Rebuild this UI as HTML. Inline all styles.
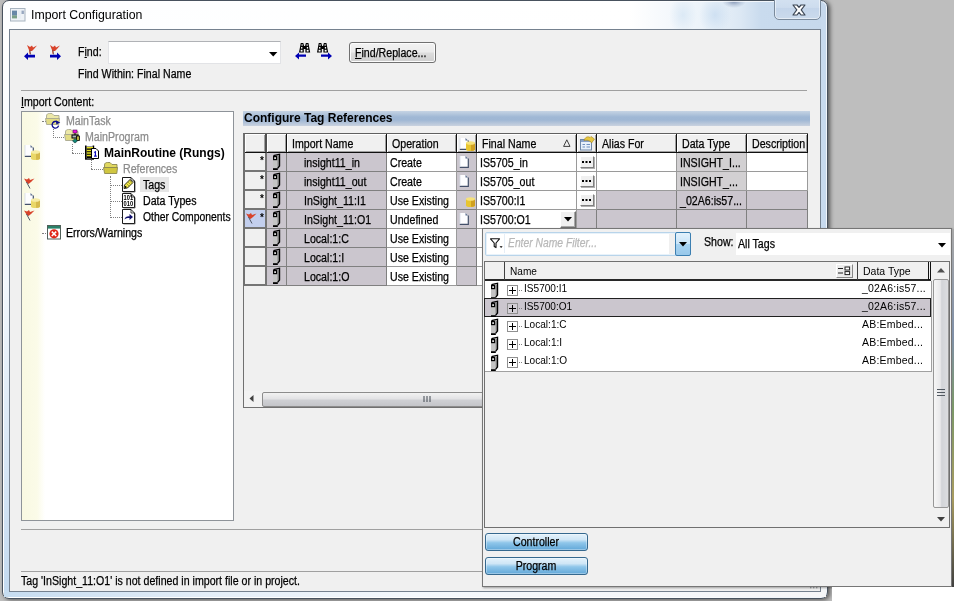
<!DOCTYPE html>
<html>
<head>
<meta charset="utf-8">
<title>Import Configuration</title>
<style>
html,body{margin:0;padding:0;}
body{width:954px;height:601px;overflow:hidden;position:relative;background:#bebebe;font-family:"Liberation Sans",sans-serif;font-size:12px;color:#000;}
.abs{position:absolute;}
svg{position:absolute;overflow:visible;}
.t{position:absolute;white-space:nowrap;line-height:14px;height:14px;transform:scaleX(.885);transform-origin:0 50%;-webkit-text-stroke:.25px currentColor;}
.tb{position:absolute;white-space:nowrap;line-height:14px;height:14px;font-weight:bold;}
.n{display:inline-block;transform:scaleX(.885);transform-origin:0 50%;-webkit-text-stroke:.25px currentColor;}
.g{color:#8c8c8c;}
u{text-decoration:underline;}
/* window */
#win{left:2px;top:0px;width:826px;height:599px;box-sizing:border-box;border:1px solid #48525e;border-radius:7px;background:radial-gradient(ellipse 12px 7px at 731px 0px,rgba(90,110,150,.7),rgba(120,140,175,.3) 60%,rgba(160,180,210,0) 100%),radial-gradient(ellipse 16px 20px at 712px 14px,rgba(200,220,240,.8),rgba(200,220,240,0) 100%),radial-gradient(ellipse 14px 20px at 680px 14px,rgba(214,230,244,.8),rgba(214,230,244,0) 100%),linear-gradient(90deg,#fdfeff 0,#ffffff 76%,#f4f8fc 81%,#eaf2f9 86%,#dce8f4 89.5%,#c9dbee 92%,#c6d8ec);box-shadow:inset 0 0 0 1px rgba(255,255,255,.75),2px 1px 4px rgba(0,0,0,.55);}
#lframe{left:4px;top:29px;width:5px;height:566px;background:linear-gradient(#ffffff,#f2f7fc 45%,#c4daf0);}
#bframe{left:4px;top:591px;width:822px;height:6px;background:linear-gradient(90deg,#c6dcf0,#e4eef8 25%,#f4f8fc 50%,#f6f6f8);}
#rframe{left:821px;top:20px;width:5px;height:576px;background:linear-gradient(#c8daee,#c8daee 40%,#f4f6f8);}
#client{left:9px;top:29px;width:812px;height:563px;background:#f0f0f0;border:1px solid #75818f;box-sizing:border-box;}
#title{left:31px;top:7px;font-size:12.3px;line-height:16px;height:16px;position:absolute;white-space:nowrap;}
/* grid */
#grid{left:243px;top:133px;border-left:2px solid #707070;border-top:1px solid #606060;display:grid;grid-template-columns:22px 20px 100px 70px 20px 100px 20px 80px 70px 61px;grid-template-rows:19px repeat(7,19px);}
#grid>div{box-sizing:border-box;border-right:1px solid #808080;border-bottom:1px solid #808080;line-height:20px;white-space:nowrap;overflow:hidden;padding-left:3px;position:relative;}
#grid>.h{background:#f0f0f0;border-right:1px solid #101010;border-bottom:1px solid #101010;box-shadow:inset 1px 1px 0 #fff,inset -1px -1px 0 #a0a0a0;line-height:20px;padding-left:5px;}
#grid>.rh{background:#f0f0f0;border-right:2px solid #757575;border-bottom:2px solid #757575;}
#grid>.rh.sel{background:#c3cfee;}
#grid>.h.h0{border-right:2px solid #505050;}
#grid>.l{background:#cbc6ce;}
#grid>.w{background:#fff;border-color:#9a9a9a;}
#grid>.d{background:#d2d0d2;border-color:#9a9a9a;}
#grid>.in{padding-left:17px;}
.star{position:absolute;left:15px;top:3px;font-size:10px;line-height:10px;font-weight:bold;}
/* popup */
#pop{left:482px;top:228px;width:470px;height:359px;box-sizing:border-box;border:1px solid #767676;background:#f0f0f0;box-shadow:1px 1px 2px rgba(0,0,0,.35);}
.pr{position:absolute;left:485px;width:446px;height:18px;box-sizing:border-box;background:#fff;}
.pt{position:absolute;white-space:nowrap;line-height:14px;height:14px;font-size:10.5px;transform:scaleX(.96);transform-origin:0 50%;}
.btn{position:absolute;box-sizing:border-box;border:1px solid #35688e;border-radius:3px;background:linear-gradient(#e4f2fb,#cfe6f6 35%,#8fc6ea 55%,#62a8d8);box-shadow:inset 0 0 0 1px rgba(255,255,255,.35);text-align:center;line-height:17px;}
</style>
</head>
<body>
<div id="root" style="position:absolute;left:0;top:0;width:954px;height:601px;will-change:transform;">

<div id="win" class="abs"></div>
<div id="lframe" class="abs"></div><div id="bframe" class="abs"></div><div id="rframe" class="abs"></div>
<div id="client" class="abs"></div>
<svg style="left:10px;top:8px" width="16" height="14" viewBox="0 0 16 14" ><rect x=".5" y=".5" width="14.5" height="12.5" fill="#eef2f6" stroke="#a8b4c0" stroke-width="1"/><rect x="2" y="2.6" width="5" height="5" fill="#6888a8"/><rect x="2" y="7.4" width="5" height="3" fill="#7aa088"/><rect x="8" y="2.6" width="3" height="8" fill="#e8eef4"/><rect x="11.5" y="2.6" width="2.4" height="3.4" fill="#98a8c0"/></svg>
<div id="title">Import Configuration</div>
<div class="abs" style="left:774px;top:-3px;width:47px;height:23px;box-sizing:border-box;border:1px solid #7a8a9c;border-radius:0 0 5px 5px;background:linear-gradient(#d4e2f1,#cddcee 45%,#c4d5ea 50%,#cbdaec);box-shadow:inset 0 0 0 1px rgba(255,255,255,.5);"></div>
<svg style="left:792px;top:4px" width="14" height="12" viewBox="0 0 14 12" ><path d="M1 1 H5 L7 3.4 L9 1 H13 L9.2 5.8 L13 11 H9 L7 8.4 L5 11 H1 L4.8 5.8 Z" fill="#fff" stroke="#3c4654" stroke-width="1.2" stroke-linejoin="round"/></svg>
<svg style="left:24px;top:44px" width="14" height="16" viewBox="0 0 14 16" ><path d="M3 1 L6 3 L8 1.5 L9 3.5 L13 1.5 L10 5 L8 7 L6.2 7 L6.6 10 L5.6 10 L5 6 Z" fill="#d8432b"/><path d="M5.8 6 L6.6 10.5" stroke="#6a4a4a" stroke-width=".8" fill="none"/><path d="M11 10.8 H4 V8.4 L0 12.2 L4 16 V13.4 H11 Z" fill="#0000b4"/></svg>
<svg style="left:48px;top:44px" width="14" height="16" viewBox="0 0 14 16" ><g transform="translate(-1,0)"><path d="M3 1 L6 3 L8 1.5 L9 3.5 L13 1.5 L10 5 L8 7 L6.2 7 L6.6 10 L5.6 10 L5 6 Z" fill="#d8432b"/><path d="M5.8 6 L6.6 10.5" stroke="#6a4a4a" stroke-width=".8" fill="none"/></g><path d="M2 10.8 H9 V8.4 L13 12.2 L9 16 V13.4 H2 Z" fill="#0000b4"/></svg>
<div class="t" style="left:78px;top:45px;">F<u>i</u>nd:</div>
<div class="abs" style="left:108px;top:41px;width:173px;height:23px;box-sizing:border-box;border:1px solid #e2e3e6;border-top-color:#b0b2b6;background:#fff;"></div>
<svg style="left:269px;top:52px" width="9" height="5" viewBox="0 0 9 5" ><path d="M0 0 H8.4 L4.2 4.4 Z" fill="#000"/></svg>
<svg style="left:295px;top:43px" width="16" height="17" viewBox="0 0 16 17" ><g transform="translate(4,0) scale(.8,1)"><path d="M2.2 0 H5.4 L6.4 3 H7.6 L8.6 0 H11.8 L14 9.6 H8 V6 H6 V9.6 H0 Z" fill="#000"/><rect x="3.2" y="1.2" width="1.3" height="1.6" fill="#fff"/><rect x="9.5" y="1.2" width="1.3" height="1.6" fill="#fff"/><rect x="2.6" y="4" width="1.6" height="1.6" fill="#fff"/><rect x="9.8" y="4" width="1.6" height="1.6" fill="#fff"/><rect x="2" y="6.8" width="2.4" height="1.8" fill="#fff"/><rect x="9.6" y="6.8" width="2.4" height="1.8" fill="#fff"/></g><path d="M11 11.4 H4 V9.4 L0 13 L4 16.6 V13.8 H11 Z" fill="#0000b4"/></svg>
<svg style="left:317px;top:43px" width="16" height="17" viewBox="0 0 16 17" ><g transform="translate(0,0) scale(.8,1)"><path d="M2.2 0 H5.4 L6.4 3 H7.6 L8.6 0 H11.8 L14 9.6 H8 V6 H6 V9.6 H0 Z" fill="#000"/><rect x="3.2" y="1.2" width="1.3" height="1.6" fill="#fff"/><rect x="9.5" y="1.2" width="1.3" height="1.6" fill="#fff"/><rect x="2.6" y="4" width="1.6" height="1.6" fill="#fff"/><rect x="9.8" y="4" width="1.6" height="1.6" fill="#fff"/><rect x="2" y="6.8" width="2.4" height="1.8" fill="#fff"/><rect x="9.6" y="6.8" width="2.4" height="1.8" fill="#fff"/></g><path d="M4 11.4 H11 V9.4 L15 13 L11 16.6 V13.8 H4 Z" fill="#0000b4"/></svg>
<div class="t" style="left:78px;top:67px;">Find Within: Final Name</div>
<div class="abs" style="left:349px;top:42px;width:87px;height:21px;box-sizing:border-box;border:1px solid #707070;border-radius:3px;background:linear-gradient(#f2f2f2,#ebebeb 48%,#dddddd 52%,#cfcfcf);box-shadow:inset 0 0 0 1px #fcfcfc;"></div>
<div class="t" style="left:355px;top:46px;"><u>F</u>ind/Replace...</div>
<div class="abs" style="left:21px;top:90px;width:786px;height:1px;background:#a0a0a0;"></div>
<div class="t" style="left:21px;top:95px;"><u>I</u>mport Content:</div>
<div class="abs" id="tree" style="left:21px;top:111px;width:213px;height:410px;box-sizing:border-box;border:1px solid #8e9399;background:linear-gradient(90deg,#f9f9e2 0,#fbfbe8 15px,#fff 23px);"></div>
<div class="abs" style="left:42px;top:121px;width:4px;height:0;border-top:1px dotted #808080;"></div>
<div class="abs" style="left:53px;top:129px;width:0;height:9px;border-left:1px dotted #808080;"></div>
<div class="abs" style="left:53px;top:137px;width:11px;height:0;border-top:1px dotted #808080;"></div>
<div class="abs" style="left:72px;top:144px;width:0;height:9px;border-left:1px dotted #808080;"></div>
<div class="abs" style="left:72px;top:153px;width:12px;height:0;border-top:1px dotted #808080;"></div>
<div class="abs" style="left:91px;top:160px;width:0;height:9px;border-left:1px dotted #808080;"></div>
<div class="abs" style="left:91px;top:169px;width:12px;height:0;border-top:1px dotted #808080;"></div>
<div class="abs" style="left:110px;top:176px;width:0;height:42px;border-left:1px dotted #808080;"></div>
<div class="abs" style="left:110px;top:185px;width:12px;height:0;border-top:1px dotted #808080;"></div>
<div class="abs" style="left:110px;top:201px;width:12px;height:0;border-top:1px dotted #808080;"></div>
<div class="abs" style="left:110px;top:217px;width:12px;height:0;border-top:1px dotted #808080;"></div>
<div class="abs" style="left:42px;top:233px;width:4px;height:0;border-top:1px dotted #808080;"></div>
<svg style="left:45px;top:113px" width="15" height="12" viewBox="0 0 15 12" ><path d="M1.5 3 C1.5 1 3 0.5 4.5 0.5 H7 L9 2.5 H14 V6 H1.5 Z" fill="#ece8a8" stroke="#a8a890" stroke-width=".9"/><path d="M.5 5.5 H14.5 L13.8 11.5 H1.6 Z" fill="#e2dc84" stroke="#a8a890" stroke-width=".9"/></svg>
<svg style="left:51px;top:120px" width="10" height="9" viewBox="0 0 10 9" ><path d="M6.5 2.2 A3.3 3.3 0 1 0 7.6 5.6" stroke="#0a0a8c" stroke-width="1.3" fill="none"/><path d="M4.8 .2 L9.2 2.6 L5.4 4.6 Z" fill="#0a0a8c"/></svg>
<svg style="left:64px;top:129px" width="15" height="12" viewBox="0 0 15 12" ><path d="M1.5 3 C1.5 1 3 0.5 4.5 0.5 H7 L9 2.5 H14 V6 H1.5 Z" fill="#ece8a8" stroke="#a8a890" stroke-width=".9"/><path d="M.5 5.5 H14.5 L13.8 11.5 H1.6 Z" fill="#e2dc84" stroke="#a8a890" stroke-width=".9"/></svg>
<svg style="left:72px;top:130px" width="8" height="13" viewBox="0 0 8 13" ><rect x="1" y="0" width="4" height="3" fill="#f010e0" stroke="#501050" stroke-width=".6"/><path d="M3 3 V5" stroke="#000" stroke-width="1"/><rect x="0" y="5" width="6" height="3" fill="#a8b8b8" stroke="#000" stroke-width="1"/><rect x="4.5" y="6" width="3" height="4.5" fill="#b8b040" stroke="#000" stroke-width=".8"/><path d="M3 8.5 L5.5 11 L3 13 L.5 11 Z" fill="#108878" stroke="#103030" stroke-width=".6"/></svg>
<svg style="left:85px;top:145px" width="14" height="15" viewBox="0 0 14 15" ><path d="M.8 .5 V14 M8.4 .5 V4 M8.4 12 V14" stroke="#000" stroke-width="1.6" fill="none"/><rect x="1.6" y="1.6" width="6" height="11.4" fill="#000"/><path d="M1.8 2.8 H8 M1.8 5.4 H8 M1.8 8 H8 M1.8 10.6 H8" stroke="#e6e020" stroke-width="1.5"/><path d="M0 14 H9" stroke="#000" stroke-width="1.4"/><path d="M6.5 3.5 H11 L13.5 6 V13.5 H6.5 Z" fill="#fff" stroke="#000" stroke-width="1"/><path d="M9.2 7.6 L10.4 6.8 V11 M9 11.2 H11.8" stroke="#1010c0" stroke-width="1.2" fill="none"/></svg>
<svg style="left:103px;top:162px" width="15" height="12" viewBox="0 0 15 12" ><path d="M1.5 3 C1.5 1 3 0.5 4.5 0.5 H7 L9 2.5 H14 V6 H1.5 Z" fill="#e0d860" stroke="#8c8850" stroke-width=".9"/><path d="M.5 5.5 H14.5 L13.8 11.5 H1.6 Z" fill="#d0c640" stroke="#8c8850" stroke-width=".9"/></svg>
<svg style="left:122px;top:177px" width="14" height="16" viewBox="0 0 14 16" ><path d="M.5 .5 H9 L12.5 4 V14.5 H.5 Z" fill="#fff" stroke="#000" stroke-width=".9"/><path d="M9 .5 V4 H12.5" fill="none" stroke="#000" stroke-width=".7"/><path d="M13.1 4.5 V15 H1.5" stroke="#303030" stroke-width=".6" fill="none"/><path d="M2 11.5 L2.5 8 L8 2.5 L11 5.5 L5.5 11 Z" fill="#f0e84a" stroke="#000" stroke-width=".8"/><path d="M4.5 6.5 L7.5 9.5 M6 5 L9 8 M7.3 3.6 L10.3 6.6" stroke="#8a8420" stroke-width=".7"/><circle cx="3.6" cy="10" r=".9" fill="#000"/></svg>
<svg style="left:122px;top:193px" width="14" height="16" viewBox="0 0 14 16" ><path d="M.5 .5 H9 L12.5 4 V14.5 H.5 Z" fill="#fff" stroke="#000" stroke-width=".9"/><path d="M9 .5 V4 H12.5" fill="none" stroke="#000" stroke-width=".7"/><path d="M13.1 4.5 V15 H1.5" stroke="#303030" stroke-width=".6" fill="none"/><g font-family="Liberation Sans,sans-serif" font-size="7" font-weight="bold" fill="#000"><text x="1.6" y="7.4" textLength="9.6" lengthAdjust="spacingAndGlyphs">101</text><text x="1.6" y="13.2" textLength="9.6" lengthAdjust="spacingAndGlyphs">010</text></g></svg>
<svg style="left:122px;top:209px" width="14" height="16" viewBox="0 0 14 16" ><path d="M.5 .5 H9 L12.5 4 V14.5 H.5 Z" fill="#fff" stroke="#000" stroke-width=".9"/><path d="M9 .5 V4 H12.5" fill="none" stroke="#000" stroke-width=".7"/><path d="M13.1 4.5 V15 H1.5" stroke="#303030" stroke-width=".6" fill="none"/><path d="M2.5 10.5 C3 8 5 7.2 7.5 7.4 V5 L11 8 L7.5 11 V8.9 C5.5 8.8 4 9.2 2.5 10.5 Z" fill="#10106c"/></svg>
<svg style="left:47px;top:225px" width="14" height="15" viewBox="0 0 14 15" ><rect x=".5" y=".5" width="13" height="13.5" fill="#fff" stroke="#506058" stroke-width="1"/><rect x="1" y="1" width="12" height="2.6" fill="#2a8068"/><circle cx="7" cy="8.8" r="4.6" fill="#e02818"/><path d="M4.8 6.6 L9.2 11 M9.2 6.6 L4.8 11" stroke="#fff" stroke-width="1.5"/></svg>
<div class="abs" style="left:140px;top:177px;width:29px;height:15px;background:#e6e6e6;"></div>
<div class="t g" style="left:66px;top:114px;">MainTask</div>
<div class="t g" style="left:85px;top:130px;">MainProgram</div>
<div class="tb" style="left:104px;top:146px;">MainRoutine (Rungs)</div>
<div class="t g" style="left:123px;top:162px;">References</div>
<div class="t" style="left:143px;top:178px;">Tags</div>
<div class="t" style="left:143px;top:194px;">Data Types</div>
<div class="t" style="left:143px;top:210px;transform:scaleX(.865);">Other Components</div>
<div class="t" style="left:66px;top:226px;">Errors/Warnings</div>
<svg style="left:24px;top:145px" width="10" height="12" viewBox="0 0 10 12" ><path d="M1 0 H6.5 L9 2.5 V11 H1 Z" fill="#fdfdff"/><path d="M6.5 0 L9 2.5 H6.5 Z" fill="#5a6d8c"/><path d="M9.3 2.5 V11.3 H.8" stroke="#44506a" stroke-width="1.2" fill="none"/><path d="M1 0 V11" stroke="#d4dae6" stroke-width=".8"/></svg><svg style="left:31px;top:150px" width="9" height="11" viewBox="0 0 9 11" ><path d="M0 2 V8.4 C0 10.4 9 10.4 9 8.4 V2 Z" fill="#ead868"/><path d="M5 2 V9.8 C7 9.7 9 9.2 9 8.4 V2 Z" fill="#d6ba4c"/><ellipse cx="4.5" cy="2" rx="4.5" ry="1.8" fill="#f6eca4"/></svg>
<svg style="left:24px;top:177px" width="11" height="12" viewBox="0 0 11 12" ><path d="M0 1.5 L3 2.5 L5 1 L6 3 L10.5 1.5 L7 5 L4.5 7 L2.5 5.5 Z" fill="#d8432b"/><path d="M2.5 5 L6 11.5" stroke="#505868" stroke-width="1" fill="none"/></svg>
<svg style="left:24px;top:193px" width="10" height="12" viewBox="0 0 10 12" ><path d="M1 0 H6.5 L9 2.5 V11 H1 Z" fill="#fdfdff"/><path d="M6.5 0 L9 2.5 H6.5 Z" fill="#5a6d8c"/><path d="M9.3 2.5 V11.3 H.8" stroke="#44506a" stroke-width="1.2" fill="none"/><path d="M1 0 V11" stroke="#d4dae6" stroke-width=".8"/></svg><svg style="left:31px;top:198px" width="9" height="11" viewBox="0 0 9 11" ><path d="M0 2 V8.4 C0 10.4 9 10.4 9 8.4 V2 Z" fill="#ead868"/><path d="M5 2 V9.8 C7 9.7 9 9.2 9 8.4 V2 Z" fill="#d6ba4c"/><ellipse cx="4.5" cy="2" rx="4.5" ry="1.8" fill="#f6eca4"/></svg>
<svg style="left:24px;top:209px" width="11" height="12" viewBox="0 0 11 12" ><path d="M0 1.5 L3 2.5 L5 1 L6 3 L10.5 1.5 L7 5 L4.5 7 L2.5 5.5 Z" fill="#d8432b"/><path d="M2.5 5 L6 11.5" stroke="#505868" stroke-width="1" fill="none"/></svg>
<div class="abs" style="left:243px;top:111px;width:567px;height:15px;background:linear-gradient(#c6d4e4,#a0b8d5 40%,#9fb7d4 60%,#c9d2df);"></div>
<div class="tb" style="left:244px;top:111px;">Configure Tag References</div>
<div id="grid" class="abs">
<div class="h h0"></div><div class="h"></div><div class="h"><span class="n">Import Name</span></div><div class="h"><span class="n">Operation</span></div><div class="h"></div><div class="h"><span class="n">Final Name</span></div><div class="h"></div><div class="h"><span class="n">Alias For</span></div><div class="h"><span class="n">Data Type</span></div><div class="h"><span class="n">Description</span></div>
<div class="rh"><span class="star">*</span></div><div class="l"></div><div class="l in"><span class="n">insight11_in</span></div><div class="w"><span class="n">Create</span></div><div class="l"></div><div class="w"><span class="n">IS5705_in</span></div><div class="w"></div><div class="w"></div><div class="d"><span class="n">INSIGHT_I...</span></div><div class="w"></div>
<div class="rh"><span class="star">*</span></div><div class="l"></div><div class="l in"><span class="n">insight11_out</span></div><div class="w"><span class="n">Create</span></div><div class="l"></div><div class="w"><span class="n">IS5705_out</span></div><div class="w"></div><div class="w"></div><div class="d"><span class="n">INSIGHT_...</span></div><div class="w"></div>
<div class="rh"><span class="star">*</span></div><div class="l"></div><div class="l in"><span class="n">InSight_11:I1</span></div><div class="w"><span class="n">Use Existing</span></div><div class="l"></div><div class="w"><span class="n">IS5700:I1</span></div><div class="w"></div><div class="l"></div><div class="l"><span class="n">_02A6:is57...</span></div><div class="l"></div>
<div class="rh sel"><span class="star">*</span></div><div class="l"></div><div class="l in"><span class="n">InSight_11:O1</span></div><div class="w"><span class="n">Undefined</span></div><div class="l"></div><div class="w"><span class="n">IS5700:O1</span></div><div class="l"></div><div class="l"></div><div class="l"></div><div class="l"></div>
<div class="rh"></div><div class="l"></div><div class="l in"><span class="n">Local:1:C</span></div><div class="w"><span class="n">Use Existing</span></div><div class="l"></div><div class="w"></div><div class="l"></div><div class="l"></div><div class="l"></div><div class="l"></div>
<div class="rh"></div><div class="l"></div><div class="l in"><span class="n">Local:1:I</span></div><div class="w"><span class="n">Use Existing</span></div><div class="l"></div><div class="w"></div><div class="l"></div><div class="l"></div><div class="l"></div><div class="l"></div>
<div class="rh"></div><div class="l"></div><div class="l in"><span class="n">Local:1:O</span></div><div class="w"><span class="n">Use Existing</span></div><div class="l"></div><div class="w"></div><div class="l"></div><div class="l"></div><div class="l"></div><div class="l"></div>
</div>
<svg style="left:273px;top:154px" width="8" height="16" viewBox="0 0 8 16" ><path d="M0 2.6 H4.6 V14.2 H0 Z" fill="#c4c4c4"/><path d="M4.6 2.4 L6.6 .8 V12 L4.6 14.2 Z" fill="#787878"/><path d="M.4 1.6 L6.6 .3 V12 L4.6 14.4" stroke="#000" stroke-width="1.2" fill="none"/><rect x=".6" y="2.6" width="3" height="3" fill="#d8d8d8" stroke="#000" stroke-width="1.2"/><rect x="0" y="14.2" width="4.8" height="1.8" fill="#000"/></svg>
<svg style="left:459px;top:156px" width="10" height="12" viewBox="0 0 10 12" ><path d="M1 0 H6.5 L9 2.5 V11 H1 Z" fill="#fdfdff"/><path d="M6.5 0 L9 2.5 H6.5 Z" fill="#5a6d8c"/><path d="M9.3 2.5 V11.3 H.8" stroke="#44506a" stroke-width="1.2" fill="none"/><path d="M1 0 V11" stroke="#d4dae6" stroke-width=".8"/></svg>
<div class="abs" style="left:580px;top:156px;width:14px;height:12px;box-sizing:border-box;background:#f0f0f0;border:1px solid;border-color:#fff #808080 #808080 #fff;box-shadow:1px 1px 0 #b0b0b0;"></div>
<svg style="left:582px;top:161px" width="9" height="2" viewBox="0 0 9 2" ><rect x="0" y="0" width="2" height="2"/><rect x="3.5" y="0" width="2" height="2"/><rect x="7" y="0" width="2" height="2"/></svg>
<svg style="left:273px;top:173px" width="8" height="16" viewBox="0 0 8 16" ><path d="M0 2.6 H4.6 V14.2 H0 Z" fill="#c4c4c4"/><path d="M4.6 2.4 L6.6 .8 V12 L4.6 14.2 Z" fill="#787878"/><path d="M.4 1.6 L6.6 .3 V12 L4.6 14.4" stroke="#000" stroke-width="1.2" fill="none"/><rect x=".6" y="2.6" width="3" height="3" fill="#d8d8d8" stroke="#000" stroke-width="1.2"/><rect x="0" y="14.2" width="4.8" height="1.8" fill="#000"/></svg>
<svg style="left:459px;top:175px" width="10" height="12" viewBox="0 0 10 12" ><path d="M1 0 H6.5 L9 2.5 V11 H1 Z" fill="#fdfdff"/><path d="M6.5 0 L9 2.5 H6.5 Z" fill="#5a6d8c"/><path d="M9.3 2.5 V11.3 H.8" stroke="#44506a" stroke-width="1.2" fill="none"/><path d="M1 0 V11" stroke="#d4dae6" stroke-width=".8"/></svg>
<div class="abs" style="left:580px;top:175px;width:14px;height:12px;box-sizing:border-box;background:#f0f0f0;border:1px solid;border-color:#fff #808080 #808080 #fff;box-shadow:1px 1px 0 #b0b0b0;"></div>
<svg style="left:582px;top:180px" width="9" height="2" viewBox="0 0 9 2" ><rect x="0" y="0" width="2" height="2"/><rect x="3.5" y="0" width="2" height="2"/><rect x="7" y="0" width="2" height="2"/></svg>
<svg style="left:273px;top:192px" width="8" height="16" viewBox="0 0 8 16" ><path d="M0 2.6 H4.6 V14.2 H0 Z" fill="#c4c4c4"/><path d="M4.6 2.4 L6.6 .8 V12 L4.6 14.2 Z" fill="#787878"/><path d="M.4 1.6 L6.6 .3 V12 L4.6 14.4" stroke="#000" stroke-width="1.2" fill="none"/><rect x=".6" y="2.6" width="3" height="3" fill="#d8d8d8" stroke="#000" stroke-width="1.2"/><rect x="0" y="14.2" width="4.8" height="1.8" fill="#000"/></svg>
<svg style="left:466px;top:197px" width="9" height="11" viewBox="0 0 9 11" ><path d="M0 2 V8.4 C0 10.4 9 10.4 9 8.4 V2 Z" fill="#e8c530"/><path d="M5 2 V9.8 C7 9.7 9 9.2 9 8.4 V2 Z" fill="#d0a020"/><ellipse cx="4.5" cy="2" rx="4.5" ry="1.8" fill="#f6e27a"/></svg>
<div class="abs" style="left:580px;top:194px;width:14px;height:12px;box-sizing:border-box;background:#f0f0f0;border:1px solid;border-color:#fff #808080 #808080 #fff;box-shadow:1px 1px 0 #b0b0b0;"></div>
<svg style="left:582px;top:199px" width="9" height="2" viewBox="0 0 9 2" ><rect x="0" y="0" width="2" height="2"/><rect x="3.5" y="0" width="2" height="2"/><rect x="7" y="0" width="2" height="2"/></svg>
<svg style="left:273px;top:211px" width="8" height="16" viewBox="0 0 8 16" ><path d="M0 2.6 H4.6 V14.2 H0 Z" fill="#c4c4c4"/><path d="M4.6 2.4 L6.6 .8 V12 L4.6 14.2 Z" fill="#787878"/><path d="M.4 1.6 L6.6 .3 V12 L4.6 14.4" stroke="#000" stroke-width="1.2" fill="none"/><rect x=".6" y="2.6" width="3" height="3" fill="#d8d8d8" stroke="#000" stroke-width="1.2"/><rect x="0" y="14.2" width="4.8" height="1.8" fill="#000"/></svg>
<svg style="left:459px;top:213px" width="10" height="12" viewBox="0 0 10 12" ><path d="M1 0 H6.5 L9 2.5 V11 H1 Z" fill="#fdfdff"/><path d="M6.5 0 L9 2.5 H6.5 Z" fill="#5a6d8c"/><path d="M9.3 2.5 V11.3 H.8" stroke="#44506a" stroke-width="1.2" fill="none"/><path d="M1 0 V11" stroke="#d4dae6" stroke-width=".8"/></svg>
<svg style="left:246px;top:212px" width="11" height="12" viewBox="0 0 11 12" ><path d="M0 1.5 L3 2.5 L5 1 L6 3 L10.5 1.5 L7 5 L4.5 7 L2.5 5.5 Z" fill="#d8432b"/><path d="M2.5 5 L6 11.5" stroke="#505868" stroke-width="1" fill="none"/></svg>
<svg style="left:273px;top:230px" width="8" height="16" viewBox="0 0 8 16" ><path d="M0 2.6 H4.6 V14.2 H0 Z" fill="#c4c4c4"/><path d="M4.6 2.4 L6.6 .8 V12 L4.6 14.2 Z" fill="#787878"/><path d="M.4 1.6 L6.6 .3 V12 L4.6 14.4" stroke="#000" stroke-width="1.2" fill="none"/><rect x=".6" y="2.6" width="3" height="3" fill="#d8d8d8" stroke="#000" stroke-width="1.2"/><rect x="0" y="14.2" width="4.8" height="1.8" fill="#000"/></svg>
<svg style="left:273px;top:249px" width="8" height="16" viewBox="0 0 8 16" ><path d="M0 2.6 H4.6 V14.2 H0 Z" fill="#c4c4c4"/><path d="M4.6 2.4 L6.6 .8 V12 L4.6 14.2 Z" fill="#787878"/><path d="M.4 1.6 L6.6 .3 V12 L4.6 14.4" stroke="#000" stroke-width="1.2" fill="none"/><rect x=".6" y="2.6" width="3" height="3" fill="#d8d8d8" stroke="#000" stroke-width="1.2"/><rect x="0" y="14.2" width="4.8" height="1.8" fill="#000"/></svg>
<svg style="left:273px;top:268px" width="8" height="16" viewBox="0 0 8 16" ><path d="M0 2.6 H4.6 V14.2 H0 Z" fill="#c4c4c4"/><path d="M4.6 2.4 L6.6 .8 V12 L4.6 14.2 Z" fill="#787878"/><path d="M.4 1.6 L6.6 .3 V12 L4.6 14.4" stroke="#000" stroke-width="1.2" fill="none"/><rect x=".6" y="2.6" width="3" height="3" fill="#d8d8d8" stroke="#000" stroke-width="1.2"/><rect x="0" y="14.2" width="4.8" height="1.8" fill="#000"/></svg>
<svg style="left:459px;top:138px" width="10" height="12" viewBox="0 0 10 12" ><path d="M1 0 H6.5 L9 2.5 V11 H1 Z" fill="#fdfdff"/><path d="M6.5 0 L9 2.5 H6.5 Z" fill="#5a6d8c"/><path d="M9.3 2.5 V11.3 H.8" stroke="#44506a" stroke-width="1.2" fill="none"/><path d="M1 0 V11" stroke="#d4dae6" stroke-width=".8"/></svg>
<svg style="left:466px;top:141px" width="9" height="11" viewBox="0 0 9 11" ><path d="M0 2 V8.4 C0 10.4 9 10.4 9 8.4 V2 Z" fill="#e8c530"/><path d="M5 2 V9.8 C7 9.7 9 9.2 9 8.4 V2 Z" fill="#d0a020"/><ellipse cx="4.5" cy="2" rx="4.5" ry="1.8" fill="#f6e27a"/></svg>
<svg style="left:579px;top:136px" width="16" height="15" viewBox="0 0 16 15" ><rect x="1.5" y="3.5" width="11" height="10.5" fill="#e8f0fa" stroke="#7088a8" stroke-width="1"/><rect x="2" y="4" width="10" height="2" fill="#88a0c8"/><path d="M3.5 8.5 H6 M7.5 8.5 H11 M3.5 11 H6 M7.5 11 H11" stroke="#7090c0" stroke-width="1.2"/><path d="M5 4.5 C6 1 9 0 11 1.5 L12 .5 L15.5 3 L12.5 7 L11.5 5.5 C9 4 7 4 5 4.5 Z" fill="#e8c840" stroke="#a08020" stroke-width=".6"/></svg>
<svg style="left:563px;top:139px" width="8" height="8" viewBox="0 0 8 8" ><path d="M.6 7.4 L3.8 .8 L7 7.4 Z" fill="none" stroke="#404040" stroke-width="1"/></svg>
<div class="abs" style="left:560px;top:211px;width:16px;height:17px;box-sizing:border-box;background:#f0f0f0;border:1px solid;border-color:#fff #707070 #707070 #fff;box-shadow:inset -1px -1px 0 #a8a8a8;"></div>
<svg style="left:564px;top:217px" width="8" height="5" viewBox="0 0 8 5" ><path d="M0 0 H8 L4 4.5 Z" fill="#000"/></svg>
<div class="abs" style="left:243px;top:286px;width:1px;height:122px;background:#707070;"></div>
<div class="abs" style="left:243px;top:391px;width:565px;height:17px;box-sizing:border-box;border-bottom:1px solid #707070;border-left:1px solid #707070;background:#f2f2f2;"></div>
<div class="abs" style="left:262px;top:392px;width:230px;height:15px;box-sizing:border-box;border:1px solid #8c8c8c;border-radius:2px;background:linear-gradient(#f2f2f2,#e2e2e4 45%,#cfd0d4 55%,#c4c5c9);"></div>
<svg style="left:249px;top:395px" width="5" height="8" viewBox="0 0 5 8" ><path d="M4.5 0 V7 L.5 3.5 Z" fill="#404040"/></svg>
<svg style="left:423px;top:396px" width="8" height="7" viewBox="0 0 8 7" ><path d="M1 0 V6 M4 0 V6 M7 0 V6" stroke="#404850" stroke-width="1"/></svg>
<div class="abs" style="left:21px;top:529px;width:788px;height:1px;background:#a0a0a0;"></div>
<div class="abs" style="left:21px;top:571px;width:788px;height:1px;background:#a0a0a0;"></div>
<div class="t" style="left:21px;top:574px;">Tag 'InSight_11:O1' is not defined in import file or in project.</div>
<svg style="left:810px;top:587px" width="8" height="3" viewBox="0 0 8 3" ><rect x="0" y="0" width="1.4" height="1.4" fill="#a0a4a8"/><rect x="3" y="0" width="1.4" height="1.4" fill="#a0a4a8"/><rect x="6" y="0" width="1.4" height="1.4" fill="#a0a4a8"/></svg>
<div id="pop" class="abs"></div>
<div class="abs" style="left:485px;top:232px;width:206px;height:24px;box-sizing:border-box;border:1px solid #b8d4ea;border-radius:2px;background:#fff;box-shadow:inset 0 0 0 1px #e8f2fa;"></div>
<svg style="left:490px;top:238px" width="13" height="11" viewBox="0 0 13 11" ><path d="M.5 .8 H9.5 L6 5 V9.6 L4.2 8.6 V5 Z" fill="#fff" stroke="#101010" stroke-width="1.1" stroke-linejoin="round"/><path d="M9.6 8.2 H12.6 L11.1 10 Z" fill="#000"/></svg>
<div class="abs" style="left:504px;top:234px;width:1px;height:19px;background:#e6eef6;"></div>
<div class="t" style="left:508px;top:236px;font-style:italic;color:#b8b8b8;font-size:12px;transform:scaleX(.86);">Enter Name Filter...</div>
<div class="abs" style="left:669px;top:234px;width:6px;height:20px;background:#f0f0f0;"></div>
<div class="abs" style="left:675px;top:232px;width:16px;height:24px;box-sizing:border-box;border:1px solid #3c7fb1;border-radius:2px;background:linear-gradient(#e4f2fc,#c8e4f8 50%,#a8d4f2 50%,#98c8ea);"></div>
<svg style="left:679px;top:242px" width="8" height="5" viewBox="0 0 8 5" ><path d="M0 0 H8 L4 4.5 Z" fill="#000"/></svg>
<div class="t" style="left:704px;top:235px;">Show:</div>
<div class="abs" style="left:736px;top:233px;width:214px;height:22px;background:#fff;"></div>
<div class="t" style="left:738px;top:237px;">All Tags</div>
<svg style="left:938px;top:243px" width="8" height="5" viewBox="0 0 8 5" ><path d="M0 0 H8 L4 4.5 Z" fill="#000"/></svg>
<div class="abs" style="left:484px;top:261px;width:466px;height:267px;box-sizing:border-box;border:1px solid #707070;background:#f0f0f0;"></div>
<div class="abs" style="left:485px;top:262px;width:446px;height:19px;box-sizing:border-box;border-bottom:2px solid #282828;background:#f0f0f0;"></div>
<div class="abs" style="left:504px;top:262px;width:1px;height:18px;background:#404040;"></div>
<div class="abs" style="left:857px;top:262px;width:1px;height:18px;background:#404040;"></div>
<div class="abs" style="left:928px;top:262px;width:3px;height:18px;background:#101010;"></div><div class="abs" style="left:929px;top:262px;width:1px;height:17px;background:#f0f0f0;"></div>
<div class="pt" style="left:510px;top:264px;">Name</div>
<div class="pt" style="left:863px;top:264px;transform:none;">Data Type</div>
<div class="abs" style="left:836px;top:264px;width:17px;height:14px;box-sizing:border-box;background:#ececec;border:1px solid;border-color:#fff #888 #888 #fff;"></div>
<svg style="left:838px;top:266px" width="13" height="10" viewBox="0 0 13 10" ><path d="M0 2.5 H5 M0 7 H5" stroke="#202020" stroke-width="1.2"/><rect x="7" y="1" width="4.6" height="3" fill="#fff" stroke="#202020" stroke-width="1"/><rect x="7" y="5.6" width="4.6" height="3" fill="#fff" stroke="#202020" stroke-width="1"/></svg>
<div class="pr" style="top:281px;"></div>
<svg style="left:491px;top:283px" width="8" height="16" viewBox="0 0 8 16" ><path d="M0 2.6 H4.6 V14.2 H0 Z" fill="#c4c4c4"/><path d="M4.6 2.4 L6.6 .8 V12 L4.6 14.2 Z" fill="#787878"/><path d="M.4 1.6 L6.6 .3 V12 L4.6 14.4" stroke="#000" stroke-width="1.2" fill="none"/><rect x=".6" y="2.6" width="3" height="3" fill="#d8d8d8" stroke="#000" stroke-width="1.2"/><rect x="0" y="14.2" width="4.8" height="1.8" fill="#000"/></svg>
<div class="abs" style="left:507px;top:285px;width:11px;height:11px;box-sizing:border-box;border:1px solid #909090;background:#fff;"></div>
<svg style="left:509px;top:287px" width="7" height="7" viewBox="0 0 7 7" ><path d="M0 3.5 H7 M3.5 0 V7" stroke="#000" stroke-width="1"/></svg>
<div class="abs" style="left:519px;top:290px;width:3px;height:0;border-top:1px dotted #808080;"></div>
<div class="pt" style="left:524px;top:281px;">IS5700:I1</div>
<div class="pt" style="left:862px;top:281px;transform:none;letter-spacing:.2px;">_02A6:is57...</div>
<div class="abs" style="left:484px;top:298px;width:447px;height:19px;box-sizing:border-box;background:#cbc6ce;border:1px solid #202020;"></div>
<svg style="left:491px;top:301px" width="8" height="16" viewBox="0 0 8 16" ><path d="M0 2.6 H4.6 V14.2 H0 Z" fill="#c4c4c4"/><path d="M4.6 2.4 L6.6 .8 V12 L4.6 14.2 Z" fill="#787878"/><path d="M.4 1.6 L6.6 .3 V12 L4.6 14.4" stroke="#000" stroke-width="1.2" fill="none"/><rect x=".6" y="2.6" width="3" height="3" fill="#d8d8d8" stroke="#000" stroke-width="1.2"/><rect x="0" y="14.2" width="4.8" height="1.8" fill="#000"/></svg>
<div class="abs" style="left:507px;top:303px;width:11px;height:11px;box-sizing:border-box;border:1px solid #909090;background:#d2ced5;"></div>
<svg style="left:509px;top:305px" width="7" height="7" viewBox="0 0 7 7" ><path d="M0 3.5 H7 M3.5 0 V7" stroke="#000" stroke-width="1"/></svg>
<div class="abs" style="left:519px;top:308px;width:3px;height:0;border-top:1px dotted #808080;"></div>
<div class="pt" style="left:524px;top:299px;">IS5700:O1</div>
<div class="pt" style="left:862px;top:299px;transform:none;letter-spacing:.2px;">_02A6:is57...</div>
<div class="pr" style="top:317px;"></div>
<svg style="left:491px;top:319px" width="8" height="16" viewBox="0 0 8 16" ><path d="M0 2.6 H4.6 V14.2 H0 Z" fill="#c4c4c4"/><path d="M4.6 2.4 L6.6 .8 V12 L4.6 14.2 Z" fill="#787878"/><path d="M.4 1.6 L6.6 .3 V12 L4.6 14.4" stroke="#000" stroke-width="1.2" fill="none"/><rect x=".6" y="2.6" width="3" height="3" fill="#d8d8d8" stroke="#000" stroke-width="1.2"/><rect x="0" y="14.2" width="4.8" height="1.8" fill="#000"/></svg>
<div class="abs" style="left:507px;top:321px;width:11px;height:11px;box-sizing:border-box;border:1px solid #909090;background:#fff;"></div>
<svg style="left:509px;top:323px" width="7" height="7" viewBox="0 0 7 7" ><path d="M0 3.5 H7 M3.5 0 V7" stroke="#000" stroke-width="1"/></svg>
<div class="abs" style="left:519px;top:326px;width:3px;height:0;border-top:1px dotted #808080;"></div>
<div class="pt" style="left:524px;top:317px;">Local:1:C</div>
<div class="pt" style="left:862px;top:317px;transform:none;letter-spacing:.2px;">AB:Embed...</div>
<div class="pr" style="top:335px;"></div>
<svg style="left:491px;top:337px" width="8" height="16" viewBox="0 0 8 16" ><path d="M0 2.6 H4.6 V14.2 H0 Z" fill="#c4c4c4"/><path d="M4.6 2.4 L6.6 .8 V12 L4.6 14.2 Z" fill="#787878"/><path d="M.4 1.6 L6.6 .3 V12 L4.6 14.4" stroke="#000" stroke-width="1.2" fill="none"/><rect x=".6" y="2.6" width="3" height="3" fill="#d8d8d8" stroke="#000" stroke-width="1.2"/><rect x="0" y="14.2" width="4.8" height="1.8" fill="#000"/></svg>
<div class="abs" style="left:507px;top:339px;width:11px;height:11px;box-sizing:border-box;border:1px solid #909090;background:#fff;"></div>
<svg style="left:509px;top:341px" width="7" height="7" viewBox="0 0 7 7" ><path d="M0 3.5 H7 M3.5 0 V7" stroke="#000" stroke-width="1"/></svg>
<div class="abs" style="left:519px;top:344px;width:3px;height:0;border-top:1px dotted #808080;"></div>
<div class="pt" style="left:524px;top:335px;">Local:1:I</div>
<div class="pt" style="left:862px;top:335px;transform:none;letter-spacing:.2px;">AB:Embed...</div>
<div class="pr" style="top:353px;"></div>
<svg style="left:491px;top:355px" width="8" height="16" viewBox="0 0 8 16" ><path d="M0 2.6 H4.6 V14.2 H0 Z" fill="#c4c4c4"/><path d="M4.6 2.4 L6.6 .8 V12 L4.6 14.2 Z" fill="#787878"/><path d="M.4 1.6 L6.6 .3 V12 L4.6 14.4" stroke="#000" stroke-width="1.2" fill="none"/><rect x=".6" y="2.6" width="3" height="3" fill="#d8d8d8" stroke="#000" stroke-width="1.2"/><rect x="0" y="14.2" width="4.8" height="1.8" fill="#000"/></svg>
<div class="abs" style="left:507px;top:357px;width:11px;height:11px;box-sizing:border-box;border:1px solid #909090;background:#fff;"></div>
<svg style="left:509px;top:359px" width="7" height="7" viewBox="0 0 7 7" ><path d="M0 3.5 H7 M3.5 0 V7" stroke="#000" stroke-width="1"/></svg>
<div class="abs" style="left:519px;top:362px;width:3px;height:0;border-top:1px dotted #808080;"></div>
<div class="pt" style="left:524px;top:353px;">Local:1:O</div>
<div class="pt" style="left:862px;top:353px;transform:none;letter-spacing:.2px;">AB:Embed...</div>
<div class="abs" style="left:485px;top:371px;width:446px;height:1px;background:#a0a0a0;"></div>
<div class="abs" style="left:931px;top:281px;width:1px;height:91px;background:#a0a0a0;"></div>
<div class="abs" style="left:932px;top:262px;width:17px;height:265px;background:#f0f0f0;"></div>
<svg style="left:937px;top:268px" width="8" height="5" viewBox="0 0 8 5" ><path d="M0 4.5 H8 L4 0 Z" fill="#505050"/></svg>
<div class="abs" style="left:933px;top:279px;width:16px;height:229px;box-sizing:border-box;border:1px solid #979797;border-radius:2px;background:linear-gradient(90deg,#f6f6f6,#e8e8ea 45%,#d2d4d8 55%,#dcdde0);"></div>
<svg style="left:937px;top:389px" width="8" height="8" viewBox="0 0 8 8" ><path d="M0 .5 H8 M0 3.5 H8 M0 6.5 H8" stroke="#505860" stroke-width="1"/></svg>
<svg style="left:937px;top:517px" width="8" height="5" viewBox="0 0 8 5" ><path d="M0 0 H8 L4 4.5 Z" fill="#404040"/></svg>
<div class="btn" style="left:485px;top:533px;width:103px;height:18px;"><span class="n" style="transform-origin:50% 50%">Controller</span></div>
<div class="btn" style="left:485px;top:557px;width:103px;height:18px;"><span class="n" style="transform-origin:50% 50%">Program</span></div>
<div class="abs" style="left:832px;top:587px;width:122px;height:14px;background:#fff;"></div>
<div class="abs" style="left:952px;top:229px;width:2px;height:358px;background:linear-gradient(#a8a8a8,#8090a8 30%,#7c9868 50%,#a89c60 75%,#404040);"></div>
</div>
</body>
</html>
